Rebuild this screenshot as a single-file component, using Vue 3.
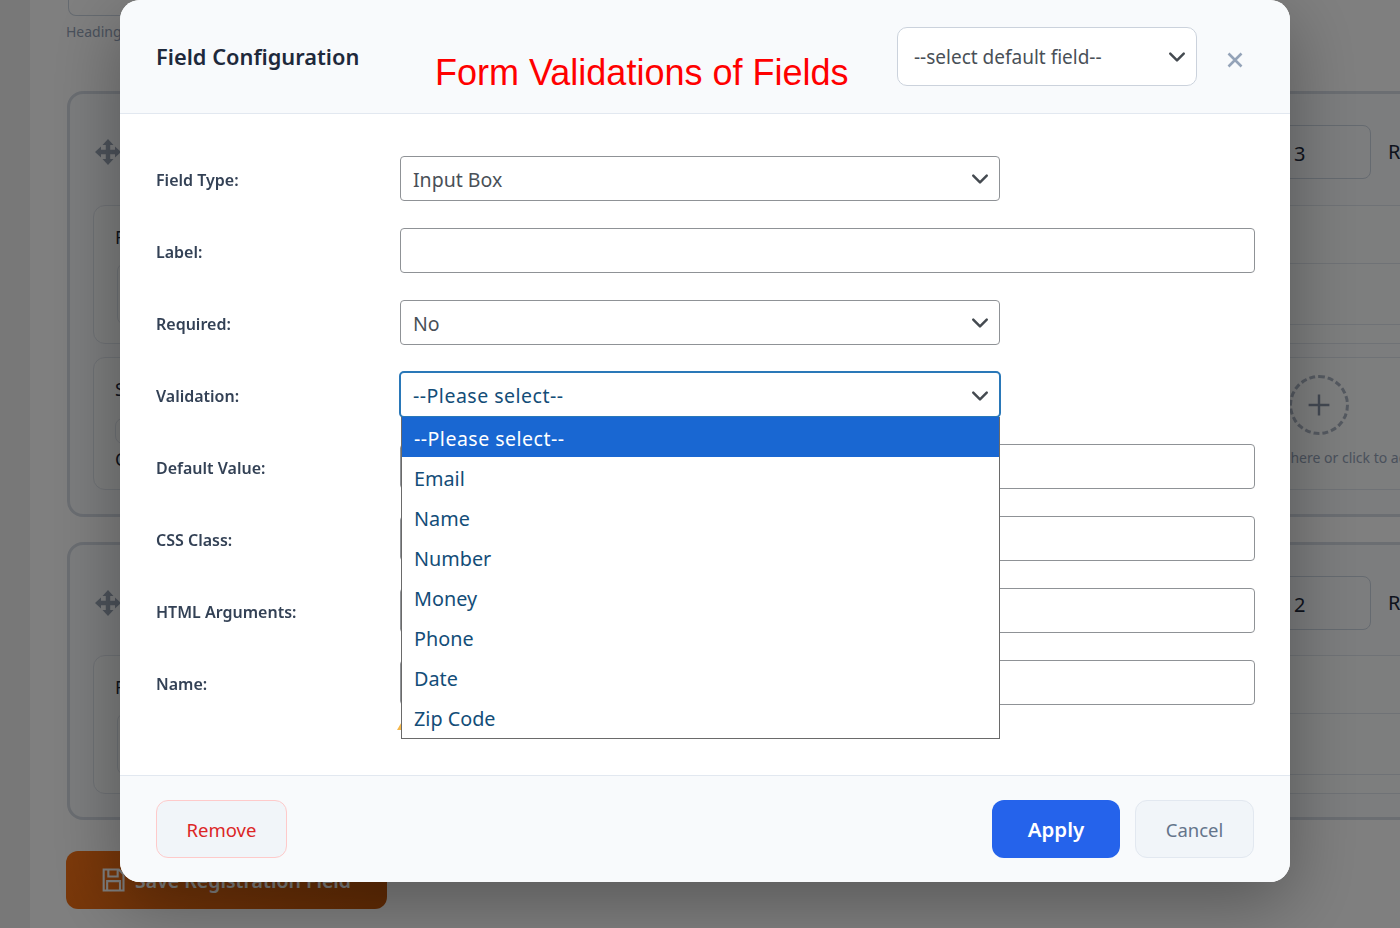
<template>
  <div class="page">
    <aside class="sidebar"></aside>
    <main class="builder">
      <div class="heading-input"></div>
      <p class="heading-hint">Heading text</p>

      <section class="group group--first">
        <div class="group__head">
          <svg class="move-icon" viewBox="0 0 26 26" aria-hidden="true">
            <path d="M13 0l5.500 6H15.200v4.800H20V7.500l6 5.500-6 5.500v-3.300h-4.800V20h3.300L13 26l-5.500-6h3.300v-4.800H6v3.300L0 13l6-5.500v3.300h4.800V6H7.500z" />
          </svg>
          <span class="spacer"></span>
          <div class="count-box">3</div>
          <span class="count-label">Rows</span>
        </div>
        <div class="slot">
          <div class="slot__title">First Name</div>
          <div class="slot__box"></div>
        </div>
        <div class="slot slot--second">
          <div class="slot__title">Select</div>
          <div class="slot__stub"></div>
          <div class="slot__note">Click</div>
          <div class="slot__add">
            <span class="add-circle">
              <svg viewBox="0 0 30 30" aria-hidden="true"><path d="M15 3v24M3 15h24" /></svg>
            </span>
            <span class="add-text">Drop here or click to add</span>
          </div>
        </div>
      </section>

      <section class="group group--last">
        <div class="group__head">
          <svg class="move-icon" viewBox="0 0 26 26" aria-hidden="true">
            <path d="M13 0l5.500 6H15.200v4.800H20V7.500l6 5.500-6 5.500v-3.300h-4.800V20h3.300L13 26l-5.500-6h3.300v-4.800H6v3.300L0 13l6-5.500v3.300h4.800V6H7.500z" />
          </svg>
          <span class="spacer"></span>
          <div class="count-box">2</div>
          <span class="count-label">Rows</span>
        </div>
        <div class="slot slot--third">
          <div class="slot__title">Full Name</div>
          <div class="slot__box"></div>
        </div>
      </section>

      <button type="button" class="save-btn">
        <svg viewBox="0 0 24 24" aria-hidden="true">
          <path d="M4 3h13l4 4v14H4zM8 3v6h8V3M7 21v-8h11v8" />
        </svg>
        Save Registration Field
      </button>
    </main>

    <div class="overlay">
      <div class="modal" role="dialog" aria-modal="true">
        <header class="modal__header">
          <h3 class="modal__title">Field Configuration</h3>
          <div class="modal__note">Form Validations of Fields</div>
          <div class="select-wrap select-wrap--default">
            <div class="control control--default">--select default field--</div>
            <svg class="chevron" viewBox="0 0 16 16" aria-hidden="true"><path d="M2 5l6 6 6-6" /></svg>
          </div>
          <button type="button" class="modal__close" aria-label="Close">
            <svg viewBox="0 0 16 16" aria-hidden="true"><path d="M1.500 1.500l13 13M14.500 1.500l-13 13" /></svg>
          </button>
        </header>

        <div class="modal__body">
          <div v-for="field in fields" :key="field.label" class="form-row">
            <label class="form-row__label">{{ field.label }}:</label>
            <div class="form-row__field">
              <template v-if="field.options">
                <div class="select-wrap">
                  <div class="control" :class="{ 'control--focus': field.open }">{{ field.value }}</div>
                  <svg class="chevron" viewBox="0 0 16 16" aria-hidden="true"><path d="M2 5l6 6 6-6" /></svg>
                  <ul v-if="field.open" class="dropdown">
                    <li
                      v-for="option in field.options"
                      :key="option"
                      class="dropdown__item"
                      :class="{ 'dropdown__item--active': option === field.value }"
                    >
                      {{ option }}
                    </li>
                  </ul>
                </div>
              </template>
              <div v-else class="control control--wide"></div>
            </div>
          </div>
          <svg class="hint-icon" viewBox="0 0 14 12" aria-hidden="true"><path d="M7 0l7 12H0z" /></svg>
        </div>

        <footer class="modal__footer">
          <button type="button" class="btn btn--remove">Remove</button>
          <div class="modal__actions">
            <button type="button" class="btn btn--apply">Apply</button>
            <button type="button" class="btn btn--cancel">Cancel</button>
          </div>
        </footer>
      </div>
    </div>
  </div>
</template>

<script setup>
const validations = ['--Please select--', 'Email', 'Name', 'Number', 'Money', 'Phone', 'Date', 'Zip Code']

const fields = [
  { label: 'Field Type', value: 'Input Box', options: ['Input Box'] },
  { label: 'Label' },
  { label: 'Required', value: 'No', options: ['No', 'Yes'] },
  { label: 'Validation', value: '--Please select--', options: validations, open: true },
  { label: 'Default Value' },
  { label: 'CSS Class' },
  { label: 'HTML Arguments' },
  { label: 'Name' },
]
</script>

<style>
html,
body {
  margin: 0;
  height: 100%;
  overflow: hidden;
}
</style>

<style scoped>
.page {
  display: flex;
  width: 1400px;
  height: 928px;
  overflow: hidden;
  background: #ffffff;
  font-family: 'Noto Sans', 'Open Sans', sans-serif;
  color: #1e293b;
}

.sidebar {
  flex: 0 0 30px;
  background: #f1f1f1;
}

.builder {
  flex: 0 0 1500px;
  padding: 0 0 0 36px;
  box-sizing: border-box;
}

.heading-input {
  width: 600px;
  height: 16px;
  margin-left: 2px;
  box-sizing: border-box;
  border: 1px solid #cbd5e1;
  border-top: none;
  border-radius: 0 0 8px 8px;
}

.heading-hint {
  margin: 7px 0 0;
  font-size: 14px;
  line-height: 18px;
  color: #94a3b8;
}

.group {
  box-sizing: border-box;
  width: 1401px;
  margin-left: 1px;
  border: 3px solid #d6dce5;
  border-radius: 16px;
  background: #f8fafc;
}

.group--first {
  height: 426px;
  margin-top: 50px;
}

.group--last {
  height: 278px;
  margin-top: 25px;
}

.group__head {
  display: flex;
  align-items: center;
  box-sizing: border-box;
  height: 111px;
  padding: 5px 0 0 25px;
}

.group--last .group__head {
  height: 113px;
  padding-top: 3px;
}

.move-icon {
  width: 26px;
  height: 26px;
  fill: #9aa5b5;
}

.spacer {
  flex: 1;
}

.count-box {
  box-sizing: border-box;
  width: 90px;
  height: 54px;
  padding: 13px 12px;
  border: 1px solid #cbd5e1;
  border-radius: 8px;
  background: #f8fafc;
  font-size: 20px;
  line-height: 30px;
}

.count-label {
  width: 77px;
  margin-left: 17px;
  font-size: 20px;
  line-height: 30px;
  white-space: nowrap;
}

.slot {
  position: relative;
  box-sizing: border-box;
  height: 139px;
  margin-left: 23px;
  border: 1px solid #dfe5ec;
  border-radius: 12px;
  background: #fbfcfd;
  padding: 18px 0 0 21px;
}

.slot--second {
  height: 133px;
  margin-top: 13px;
}

.slot--third {
  margin-top: -3px;
}

.slot__title {
  font-size: 18px;
  line-height: 26px;
}

.slot__box {
  height: 60px;
  margin: 13px 0 0 2px;
  border: 1px solid #dfe5ec;
  border-radius: 8px;
}

.slot__stub {
  width: 300px;
  height: 24px;
  margin-top: 16px;
  border: 1px solid #dfe5ec;
  border-radius: 8px;
}

.slot__note {
  margin-top: 2px;
  font-size: 18px;
  line-height: 26px;
}

.slot__add {
  position: absolute;
  top: 17px;
  left: 1160px;
  display: flex;
  flex-direction: column;
  align-items: flex-start;
  white-space: nowrap;
}

.add-circle {
  display: flex;
  align-items: center;
  justify-content: center;
  box-sizing: border-box;
  width: 60px;
  height: 60px;
  margin-left: 35px;
  border: 3px dashed #aab4c2;
  border-radius: 50%;
}

.add-circle svg {
  width: 26px;
  height: 26px;
  fill: none;
  stroke: #8692a5;
  stroke-width: 2.800;
}

.add-text {
  margin-top: 13px;
  font-size: 14px;
  line-height: 20px;
  color: #94a3b8;
}

.save-btn {
  display: flex;
  align-items: center;
  gap: 8px;
  box-sizing: border-box;
  width: 321px;
  height: 58px;
  margin-top: 31px;
  padding: 0 0 0 33px;
  border: none;
  border-radius: 12px;
  background: linear-gradient(135deg, #f97316, #c2560a);
  color: #fff;
  font-family: inherit;
  font-size: 19.500px;
  font-weight: 600;
  white-space: nowrap;
}

.save-btn svg {
  width: 28px;
  height: 28px;
  fill: none;
  stroke: #ffffff;
  stroke-width: 1.800;
}

.overlay {
  position: fixed;
  inset: 0;
  z-index: 50;
  background: rgba(0, 0, 0, 0.5);
}

.modal {
  position: absolute;
  top: 0;
  left: 120px;
  display: flex;
  flex-direction: column;
  width: 1170px;
  height: 882px;
  overflow: hidden;
  background: #ffffff;
  border-radius: 20px;
  box-shadow: 0 20px 70px rgba(0, 0, 0, 0.32);
}

.modal__header {
  display: grid;
  grid-template-columns: 279px 462px 300px auto;
  align-items: start;
  box-sizing: border-box;
  height: 114px;
  padding: 27px 0 0 36px;
  background: #f8fafc;
  border-bottom: 1px solid #e2e8f0;
}

.modal__title {
  margin: 0;
  padding-top: 13px;
  font-size: 21.800px;
  line-height: 34px;
  font-weight: 600;
  color: #1e293b;
  white-space: nowrap;
}

.modal__note {
  padding-top: 23px;
  font-family: 'Liberation Sans', Arial, sans-serif;
  font-size: 36px;
  line-height: 46px;
  color: #ff0000;
  white-space: nowrap;
}

.select-wrap {
  position: relative;
  width: 600px;
}

.select-wrap--default {
  width: 300px;
}

.control {
  box-sizing: border-box;
  height: 45px;
  padding: 0 12px;
  border: 1px solid #8f9296;
  border-radius: 4px;
  background: #ffffff;
  font-size: 19.500px;
  line-height: 46px;
  color: #495057;
  white-space: nowrap;
}

.control--default {
  height: 59px;
  padding: 0 16px;
  border-color: #cbd2dc;
  border-radius: 10px;
  font-size: 19px;
  line-height: 58px;
}

.control--wide {
  width: 855px;
}

.control--focus {
  margin: -1px -1px -1px;
  padding: 0 12px;
  height: 47px;
  border: 2px solid #2a78b8;
  border-radius: 5px;
  color: #134d78;
  letter-spacing: 0.500px;
}

.control--focus ~ .chevron {
  margin-top: -8px;
}

.chevron {
  position: absolute;
  top: 50%;
  right: 11px;
  width: 18px;
  height: 18px;
  margin-top: -9px;
  fill: none;
  stroke: #444a50;
  stroke-width: 2.200;
  stroke-linecap: round;
  stroke-linejoin: round;
}

.modal__close {
  width: 20px;
  height: 20px;
  margin: 23px 0 0 30px;
  padding: 0;
  border: none;
  background: transparent;
}

.modal__close svg {
  display: block;
  width: 16px;
  height: 16px;
  fill: none;
  stroke: #94a3b8;
  stroke-width: 2.600;
}

.modal__body {
  position: relative;
  flex: 1;
  display: flex;
  flex-direction: column;
  gap: 27px;
  padding: 42px 36px 0;
}

.form-row {
  display: grid;
  grid-template-columns: 244px 1fr;
  align-items: center;
  height: 45px;
}

.form-row__label {
  padding-top: 3px;
  font-size: 16px;
  font-weight: 600;
  color: #334155;
}

.dropdown {
  position: absolute;
  top: 46px;
  left: 1px;
  z-index: 5;
  box-sizing: border-box;
  width: 599px;
  margin: 0;
  padding: 0 0 1px;
  list-style: none;
  border: 1px solid #6a6a6a;
  border-top-width: 0;
  background: #ffffff;
}

.dropdown__item {
  height: 40px;
  padding: 0 12px;
  font-size: 19.800px;
  line-height: 43px;
  color: #134d78;
}

.dropdown__item--active {
  background: #1967d2;
  color: #ffffff;
  font-size: 19.500px;
  letter-spacing: 0.500px;
}

.hint-icon {
  position: absolute;
  top: 604px;
  left: 277px;
  width: 14px;
  height: 12px;
  fill: #f5b74a;
}

.modal__footer {
  display: flex;
  align-items: center;
  justify-content: space-between;
  box-sizing: border-box;
  height: 107px;
  padding: 0 36px;
  background: #f8fafc;
  border-top: 1px solid #e2e8f0;
}

.modal__actions {
  display: flex;
  gap: 15px;
}

.btn {
  box-sizing: border-box;
  height: 58px;
  padding: 0;
  border: 1px solid transparent;
  border-radius: 12px;
  font-family: inherit;
  font-size: 18.500px;
  cursor: pointer;
}

.btn--remove {
  width: 131px;
  background: #f1f5f9;
  border-color: #fecaca;
  color: #dc2626;
}

.btn--apply {
  width: 128px;
  background: #2563eb;
  color: #ffffff;
  font-size: 20.500px;
  font-weight: 600;
}

.btn--cancel {
  width: 119px;
  background: #f1f5f9;
  border-color: #e2e8f0;
  color: #64748b;
}
</style>
